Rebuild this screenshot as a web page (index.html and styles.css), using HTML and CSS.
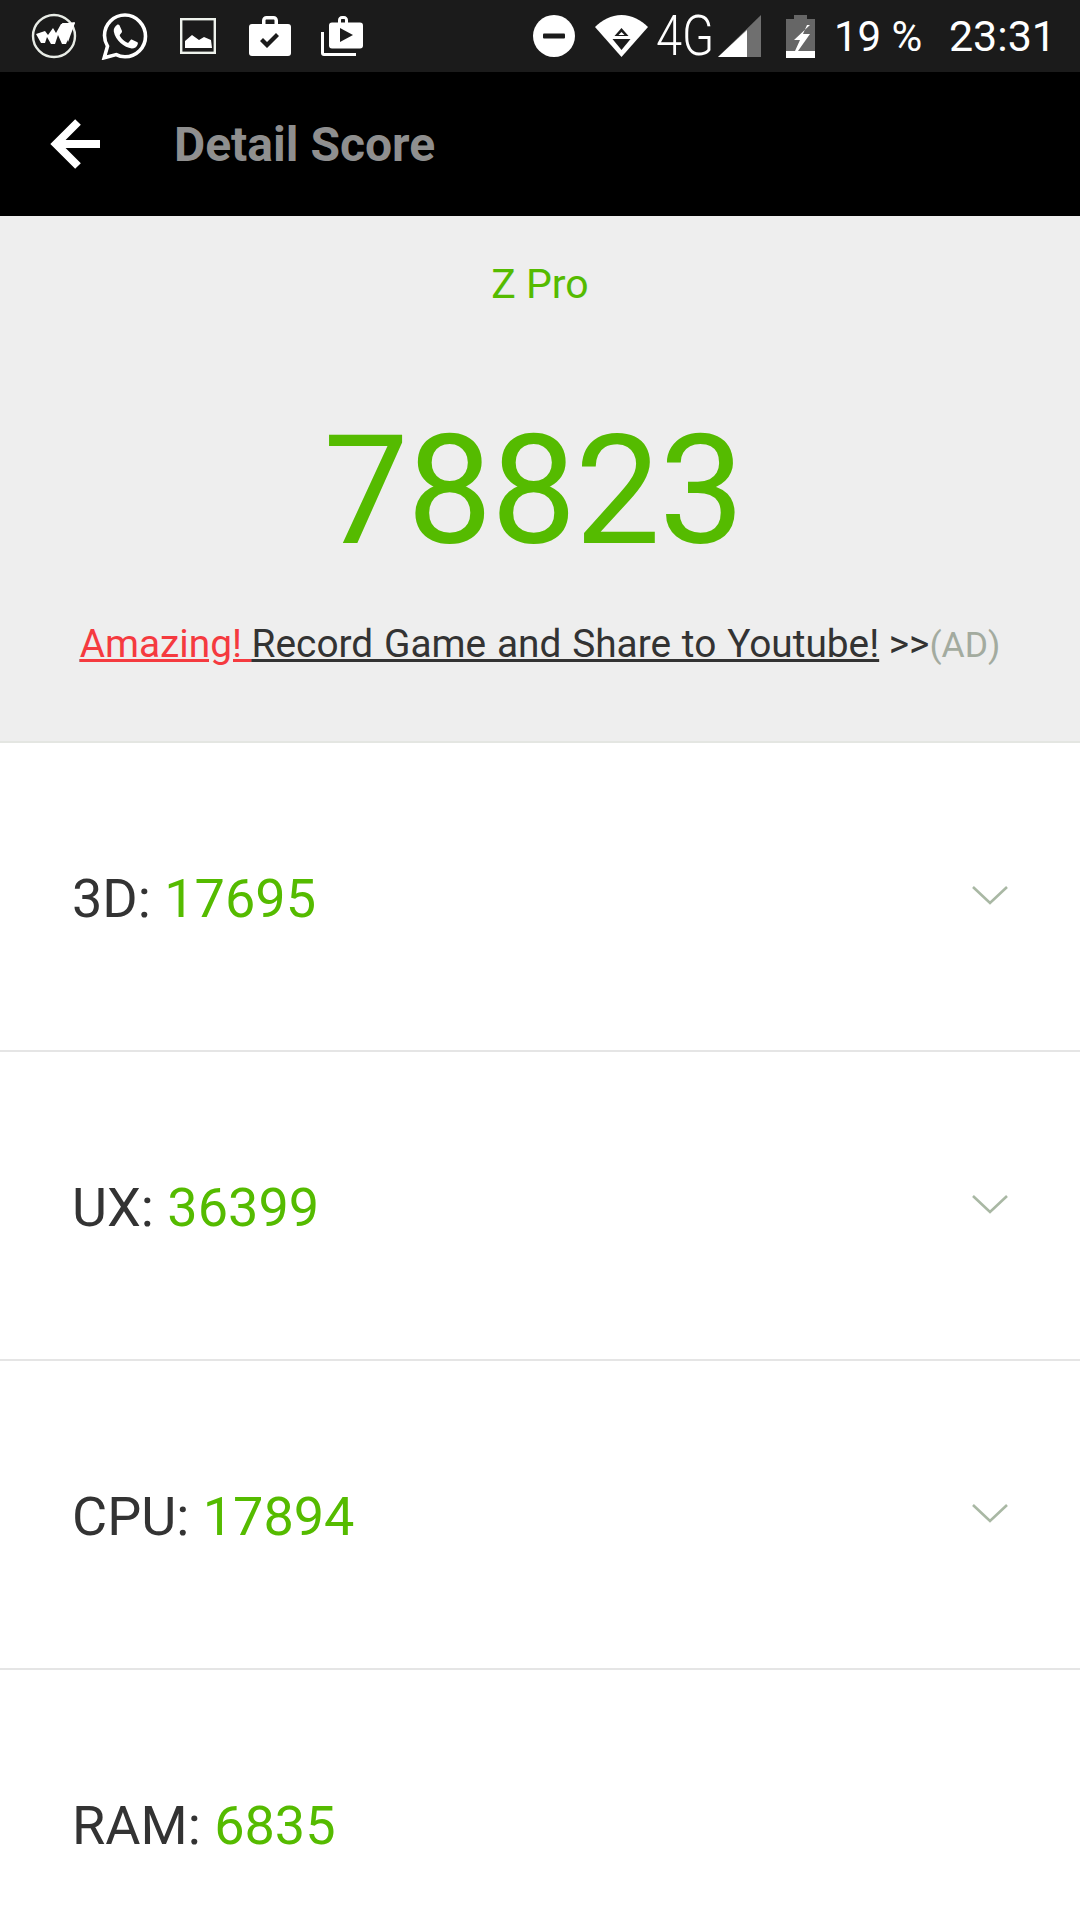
FILE: index.html
```html
<!DOCTYPE html>
<html lang="en">
<head>
<meta charset="utf-8">
<title>Detail Score</title>
<link rel="stylesheet" href="styles.css">
</head>
<body>
<div class="status">
  <div class="status-left">
    <svg class="ic ic-w" viewBox="0 0 46 46"><circle cx="23" cy="23" r="21" fill="none" stroke="#e8ece6" stroke-width="2.4"/><path d="M5 21l9-3 3 4 5-7 3 5 5-9 14-2-9 22-4 0-4-9-3 9h-4l-4-7-2 6h-4z" fill="#fff"/><path d="M31 10h13l-7 19z" fill="#fff"/></svg>
    <svg class="ic ic-wa" viewBox="0 0 48 48"><path d="M24 3C12.600 3 3.500 12.200 3.500 23.500c0 3.900 1.100 7.500 3 10.700L3.200 45.800l12-3.200c2.700 1.500 5.700 2.200 8.800 2.200 11.400 0 20.500-9.200 20.500-20.500S35.400 3 24 3z" fill="none" stroke="#fff" stroke-width="3.600"/><path d="M16.500 12.500c.9 0 1.700 0 2.200 1.200l2.200 5c.2.6.1 1.200-.2 1.700l-1.800 2.300c-.3.4-.2.8 0 1.200 2 3.200 4.300 5.200 7.500 6.800.5.2.9.1 1.200-.2l2-2.400c.4-.5 1-.6 1.600-.4l4.800 2.300c.8.4 1 1 .8 1.900-.7 3-3.400 4.500-6 4.500-7.500-.6-16.500-8-18-16.800-.4-2.900 1-5.500 3.700-7.200z" fill="#fff"/></svg>
    <svg class="ic ic-g" viewBox="0 0 36 36"><rect x="1.200" y="1.200" width="33.600" height="33.600" fill="none" stroke="#eef2ec" stroke-width="2.400"/><path d="M5 30v-7l7-6 7 5 5-3 7 3 1 8z" fill="#fff"/></svg>
    <svg class="ic ic-b" viewBox="0 0 42 40"><path d="M13 8V4.500C13 2 15 0 17.500 0h7C27 0 29 2 29 4.500V8h-3.500V4.500c0-.6-.4-1-1-1h-7c-.6 0-1 .4-1 1V8z" fill="#fff"/><rect y="8" width="42" height="32" rx="3" fill="#fff"/><path d="M11 25l3-3 4 4 9-9 3 3-12 12z" fill="#1b1b1b"/></svg>
    <svg class="ic ic-s" viewBox="0 0 42 40"><path d="M1.500 16v21a1.500 1.500 0 0 0 1.500 1.500h32" fill="none" stroke="#fff" stroke-width="3"/><path d="M17 7V4c0-2.200 1.800-4 4-4h2c2.200 0 4 1.800 4 4v3h-3V4c0-.6-.4-1-1-1h-2c-.6 0-1 .4-1 1v3z" fill="#fff"/><rect x="8" y="6.500" width="34" height="26" rx="3" fill="#fff"/><path d="M19 12l13 7-13 7z" fill="#1b1b1b"/></svg>
  </div>
  <div class="status-right">
    <svg class="ic ic-m" viewBox="0 0 42 42"><circle cx="21" cy="21" r="21" fill="#fff"/><rect x="10" y="18.500" width="22" height="5" rx="1" fill="#1b1b1b"/></svg>
    <svg class="ic ic-wifi" viewBox="0 0 53 42"><path d="M0 12C7 5 16 0 26.500 0S46 5 53 12L26.500 42z" fill="#fff"/><path d="M26.500 13l-7 8h14z" fill="#1b1b1b"/><path d="M26.500 17l-3 3h6z" fill="#fff"/><path d="M17.500 24h18l-9 11z" fill="#1b1b1b"/></svg>
    <span class="net">4G</span>
    <svg class="ic ic-sig" viewBox="0 0 43 42"><path d="M43 0v42H0z" fill="#6f6f6f"/><path d="M29 15v27H0z" fill="#fff"/></svg>
    <svg class="ic ic-bat" viewBox="0 0 29 43"><path d="M8 0h13v4h8v39H0V4h8z" fill="#666"/><path d="M0 36h29v7H0z" fill="#fff"/><path d="M24 10L8 25h6l-5 11h3l12-17h-7l4-9z" fill="#fff"/></svg>
    <span class="pct">19 %</span>
    <span class="clock">23:31</span>
  </div>
</div>
<div class="appbar">
  <svg class="back" viewBox="0 0 50 50"><path d="M50 25H6M28 3L6 25l22 22" fill="none" stroke="#fff" stroke-width="8"/></svg>
  <span class="title">Detail Score</span>
</div>
<div class="summary">
  <div class="device">Z Pro</div>
  <div class="total">78823</div>
  <div class="promo"><span class="promo-link"><span class="red">Amazing! </span>Record Game and Share to Youtube!</span> &gt;&gt;<span class="ad">(AD)</span></div>
</div>
<div class="row"><span class="label">3D: <b>17695</b></span><svg class="chev" viewBox="0 0 36 19"><path d="M1 1l17 16L35 1" fill="none" stroke="#a9b8a4" stroke-width="2.600"/></svg></div>
<div class="row"><span class="label">UX: <b>36399</b></span><svg class="chev" viewBox="0 0 36 19"><path d="M1 1l17 16L35 1" fill="none" stroke="#a9b8a4" stroke-width="2.600"/></svg></div>
<div class="row"><span class="label">CPU: <b>17894</b></span><svg class="chev" viewBox="0 0 36 19"><path d="M1 1l17 16L35 1" fill="none" stroke="#a9b8a4" stroke-width="2.600"/></svg></div>
<div class="row"><span class="label">RAM: <b>6835</b></span></div>
</body>
</html>
```
FILE: styles.css
```css
html, body { margin: 0; padding: 0; }
body { width: 1080px; height: 1920px; overflow: hidden; background: #fff; font-family: Roboto, sans-serif; }
.status { height: 72px; background: #1b1b1b; display: flex; justify-content: space-between; align-items: center; color: #fff; }
.status-left { display: flex; align-items: center; margin-left: 31px; }
.status-right { display: flex; align-items: center; margin-right: 24px; }
.ic { display: block; flex: none; }
.ic-w { width: 46px; height: 46px; }
.ic-wa { width: 48px; height: 48px; margin-left: 24px; }
.ic-g { width: 36px; height: 36px; margin-left: 31px; }
.ic-b { width: 42px; height: 40px; margin-left: 33px; }
.ic-s { width: 42px; height: 40px; margin-left: 30px; }
.ic-m { width: 42px; height: 42px; }
.ic-wifi { width: 53px; height: 42px; margin-left: 20px; }
.net { font-size: 56px; font-weight: 300; margin-left: 8px; width: 56px; line-height: 56px; transform: scaleX(.84); transform-origin: left center; white-space: nowrap; }
.ic-sig { width: 43px; height: 42px; margin-left: 6px; }
.ic-bat { width: 29px; height: 43px; margin-left: 25px; }
.pct { font-size: 42px; margin-left: 19px; width: 86px; white-space: nowrap; }
.clock { font-size: 43px; margin-left: 29px; }
.appbar { height: 144px; background: #000; display: flex; align-items: center; }
.back { width: 50px; height: 50px; margin-left: 50px; }
.title { font-size: 48px; font-weight: 700; color: #8f8f8f; margin-left: 74px; }
.summary { height: 525px; background: #eeeeee; border-bottom: 2px solid #e4e6e2; display: flex; flex-direction: column; align-items: center; }
.device { font-size: 41px; color: #55bb00; margin-top: 44px; line-height: 48px; }
.total { font-size: 152px; letter-spacing: -1.500px; color: #55bb00; line-height: 160px; margin-top: 103px; margin-right: 14px; }
.promo { font-size: 38.800px; color: #333; line-height: 46px; margin-top: 50px; white-space: nowrap; }
.promo-link { text-decoration: underline; word-spacing: 1.200px; }
.red { color: #f53a3f; text-decoration: underline; word-spacing: 0; }
.ad { color: #a3ab9f; font-size: 35.500px; }
.row { height: 307px; border-bottom: 2px solid #e5e5e5; display: flex; align-items: center; justify-content: space-between; padding: 0 72px 0 72px; }
.label { font-size: 54px; color: #333; padding-top: 3px; }
.label b { font-weight: 400; color: #55bb00; }
.chev { width: 36px; height: 19px; margin-top: -3px; }
```
